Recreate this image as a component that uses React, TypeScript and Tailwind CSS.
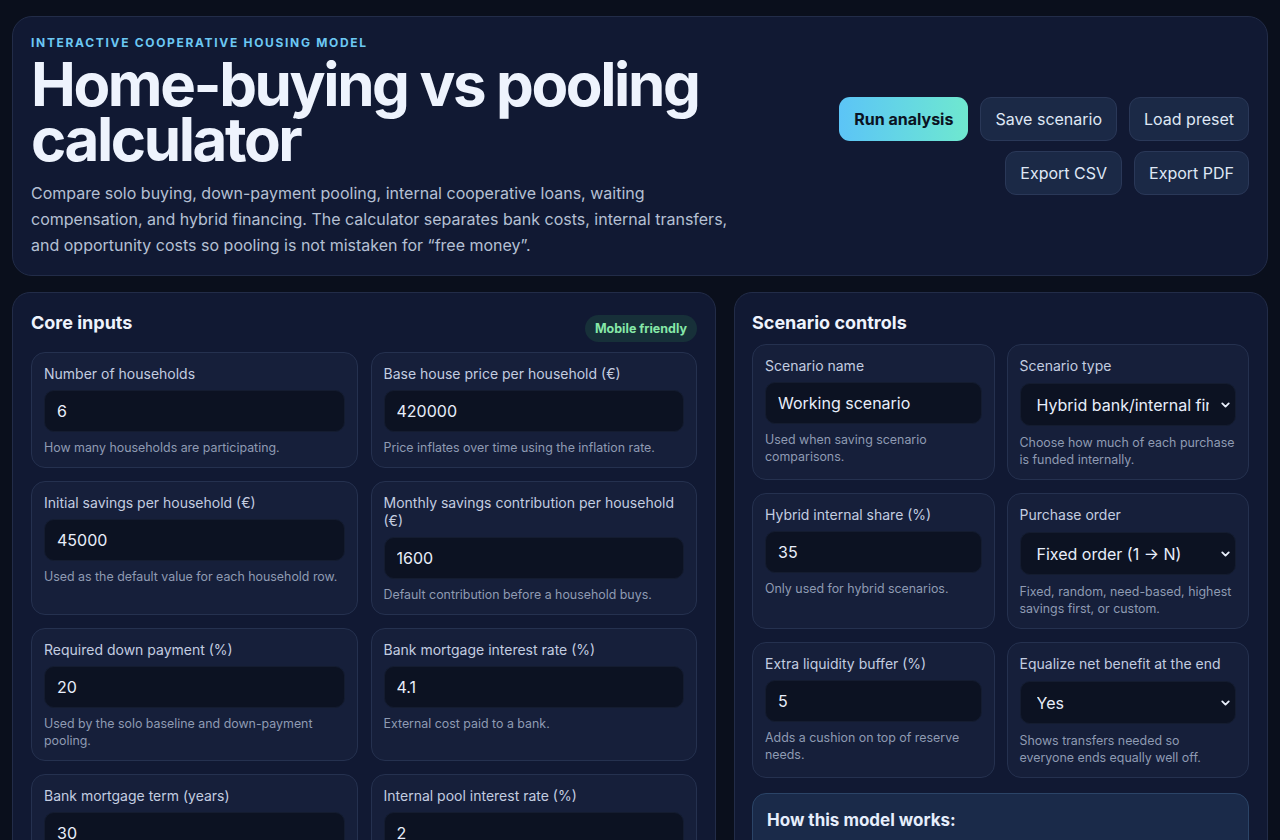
import { ChevronDown } from "lucide-react";

type Field = {
  label: string;
  value: string;
  help: string;
  options?: string[];
};

const coreFields: Field[] = [
  { label: "Number of households", value: "6", help: "How many households are participating." },
  { label: "Base house price per household (€)", value: "420000", help: "Price inflates over time using the inflation rate." },
  { label: "Initial savings per household (€)", value: "45000", help: "Used as the default value for each household row." },
  { label: "Monthly savings contribution per household (€)", value: "1600", help: "Default contribution before a household buys." },
  { label: "Required down payment (%)", value: "20", help: "Used by the solo baseline and down-payment pooling." },
  { label: "Bank mortgage interest rate (%)", value: "4.1", help: "External cost paid to a bank." },
  { label: "Bank mortgage term (years)", value: "30", help: "Amortization period for bank-financed balances." },
  { label: "Internal pool interest rate (%)", value: "2", help: "Paid by borrowers back to the pool members." },
  { label: "Savings return rate (%)", value: "3", help: "Opportunity cost of money sitting in the pool." },
  { label: "House price inflation (%)", value: "2.5", help: "Yearly growth of the base house price." },
];

const scenarioFields: Field[] = [
  { label: "Scenario name", value: "Working scenario", help: "Used when saving scenario comparisons." },
  {
    label: "Scenario type",
    value: "Hybrid bank/internal financing",
    help: "Choose how much of each purchase is funded internally.",
    options: ["Solo buying", "Down-payment pooling", "Internal cooperative loans", "Hybrid bank/internal financing"],
  },
  { label: "Hybrid internal share (%)", value: "35", help: "Only used for hybrid scenarios." },
  {
    label: "Purchase order",
    value: "Fixed order (1 → N)",
    help: "Fixed, random, need-based, highest savings first, or custom.",
    options: ["Fixed order (1 → N)", "Random", "Need-based", "Highest savings first", "Custom"],
  },
  { label: "Extra liquidity buffer (%)", value: "5", help: "Adds a cushion on top of reserve needs." },
  {
    label: "Equalize net benefit at the end",
    value: "Yes",
    help: "Shows transfers needed so everyone ends equally well off.",
    options: ["Yes", "No"],
  },
];

function FieldCard({ field }: { field: Field }) {
  return (
    <label className="flex flex-col rounded-[14px] border border-[#25314f] bg-[#161f3a] px-3 pt-3 pb-[11px]">
      <span className="text-sm leading-[18px] text-[#c3cde0]">{field.label}</span>
      {field.options ? (
        <div className="relative mt-[8px] mb-px">
          <select
            defaultValue={field.value}
            className="h-[43px] w-full appearance-none rounded-[10px] border border-[#141c30] bg-[#0c1222] pl-4 pr-[26px] text-base text-[#e8eefb] outline-none"
          >
            {field.options.map((o) => (
              <option key={o}>{o}</option>
            ))}
          </select>
          <ChevronDown
            size={13}
            strokeWidth={3.4}
            className="pointer-events-none absolute top-1/2 right-[4px] -translate-y-1/2 text-[#e8eefb]"
          />
        </div>
      ) : (
        <input
          type="text"
          defaultValue={field.value}
          className="mt-[7px] h-[42px] w-full rounded-[10px] border border-[#141c30] bg-[#0c1222] px-3 text-base text-[#e8eefb] outline-none"
        />
      )}
      <span className="mt-[7px] text-[12.4px] leading-[17px] text-[#8f9bb3]">{field.help}</span>
    </label>
  );
}

function Button({ children, primary }: { children: string; primary?: boolean }) {
  if (primary) {
    return (
      <button className="h-[44px] rounded-[11px] bg-gradient-to-r from-[#5cc4f6] to-[#6fe8cf] px-[15px] text-base font-bold text-[#0b1322]">
        {children}
      </button>
    );
  }
  return (
    <button className="h-[44px] rounded-[11px] border border-[#2a3858] bg-[#1b2946] px-[14px] text-base text-[#dfe7f5]">
      {children}
    </button>
  );
}

export default function App() {
  return (
    <div className="min-h-screen bg-[#0a0f1c] px-3 pt-4 pb-10 font-['Inter','Noto_Sans',sans-serif] text-[#e8eefb]">
      <header className="flex items-center justify-between rounded-[20px] border border-[#222c48] bg-[#111933] px-[18px] pt-[19px] pb-[17px]">
        <div className="max-w-[712px]">
          <p className="text-xs leading-[14px] font-bold tracking-[0.14em] text-[#6cc8f3]">
            INTERACTIVE COOPERATIVE HOUSING MODEL
          </p>
          <h1 className="mt-[7px] text-[60px] leading-[55px] font-bold tracking-[-0.04em] text-[#eef3fd]">
            Home-buying vs pooling calculator
          </h1>
          <p className="mt-[13px] text-base leading-[26px] text-[#b5c0d4]">
            Compare solo buying, down-payment pooling, internal cooperative loans, waiting compensation, and hybrid
            financing. The calculator separates bank costs, internal transfers, and opportunity costs so pooling is
            not mistaken for “free money”.
          </p>
        </div>
        <div className="mb-[2px] flex w-[420px] flex-wrap justify-end gap-x-3 gap-y-[10px]">
          <Button primary>Run analysis</Button>
          <Button>Save scenario</Button>
          <Button>Load preset</Button>
          <Button>Export CSV</Button>
          <Button>Export PDF</Button>
        </div>
      </header>

      <div className="mt-4 grid grid-cols-[704px_1fr] items-start gap-[18px]">
        <section className="rounded-[18px] border border-[#222c48] bg-[#111933] p-[18px]">
          <div className="mb-[10px] flex items-start justify-between">
            <h2 className="text-lg leading-6 font-bold text-[#eef3fd]">Core inputs</h2>
            <span className="mt-1 rounded-full bg-[#173039] px-[10px] py-[5px] text-[12.5px] leading-[17px] font-bold text-[#86e8a8]">
              Mobile friendly
            </span>
          </div>
          <div className="grid grid-cols-2 gap-[13px]">
            {coreFields.map((f) => (
              <FieldCard key={f.label} field={f} />
            ))}
          </div>
        </section>

        <section className="rounded-[18px] border border-[#222c48] bg-[#111933] py-[18px] pr-[18px] pl-[17px]">
          <h2 className="mb-[9px] text-lg leading-6 font-bold text-[#eef3fd]">Scenario controls</h2>
          <div className="grid grid-cols-2 gap-x-[12px] gap-y-[13px]">
            {scenarioFields.map((f) => (
              <FieldCard key={f.label} field={f} />
            ))}
          </div>
          <div className="mt-[15px] rounded-[14px] border border-[#2b4467] bg-[#1a2a49] px-[14px] py-[14px]">
            <h3 className="text-[17px] leading-6 font-bold text-[#e6eefc]">How this model works:</h3>
            <ul className="mt-2 list-disc space-y-1 pl-5 text-sm leading-5 text-[#b5c0d4]">
              <li>Bank costs are money that leaves the group for good.</li>
              <li>Internal transfers move money between households and net to zero.</li>
              <li>Opportunity costs show what pooled savings could have earned elsewhere.</li>
            </ul>
          </div>
        </section>
      </div>
    </div>
  );
}
